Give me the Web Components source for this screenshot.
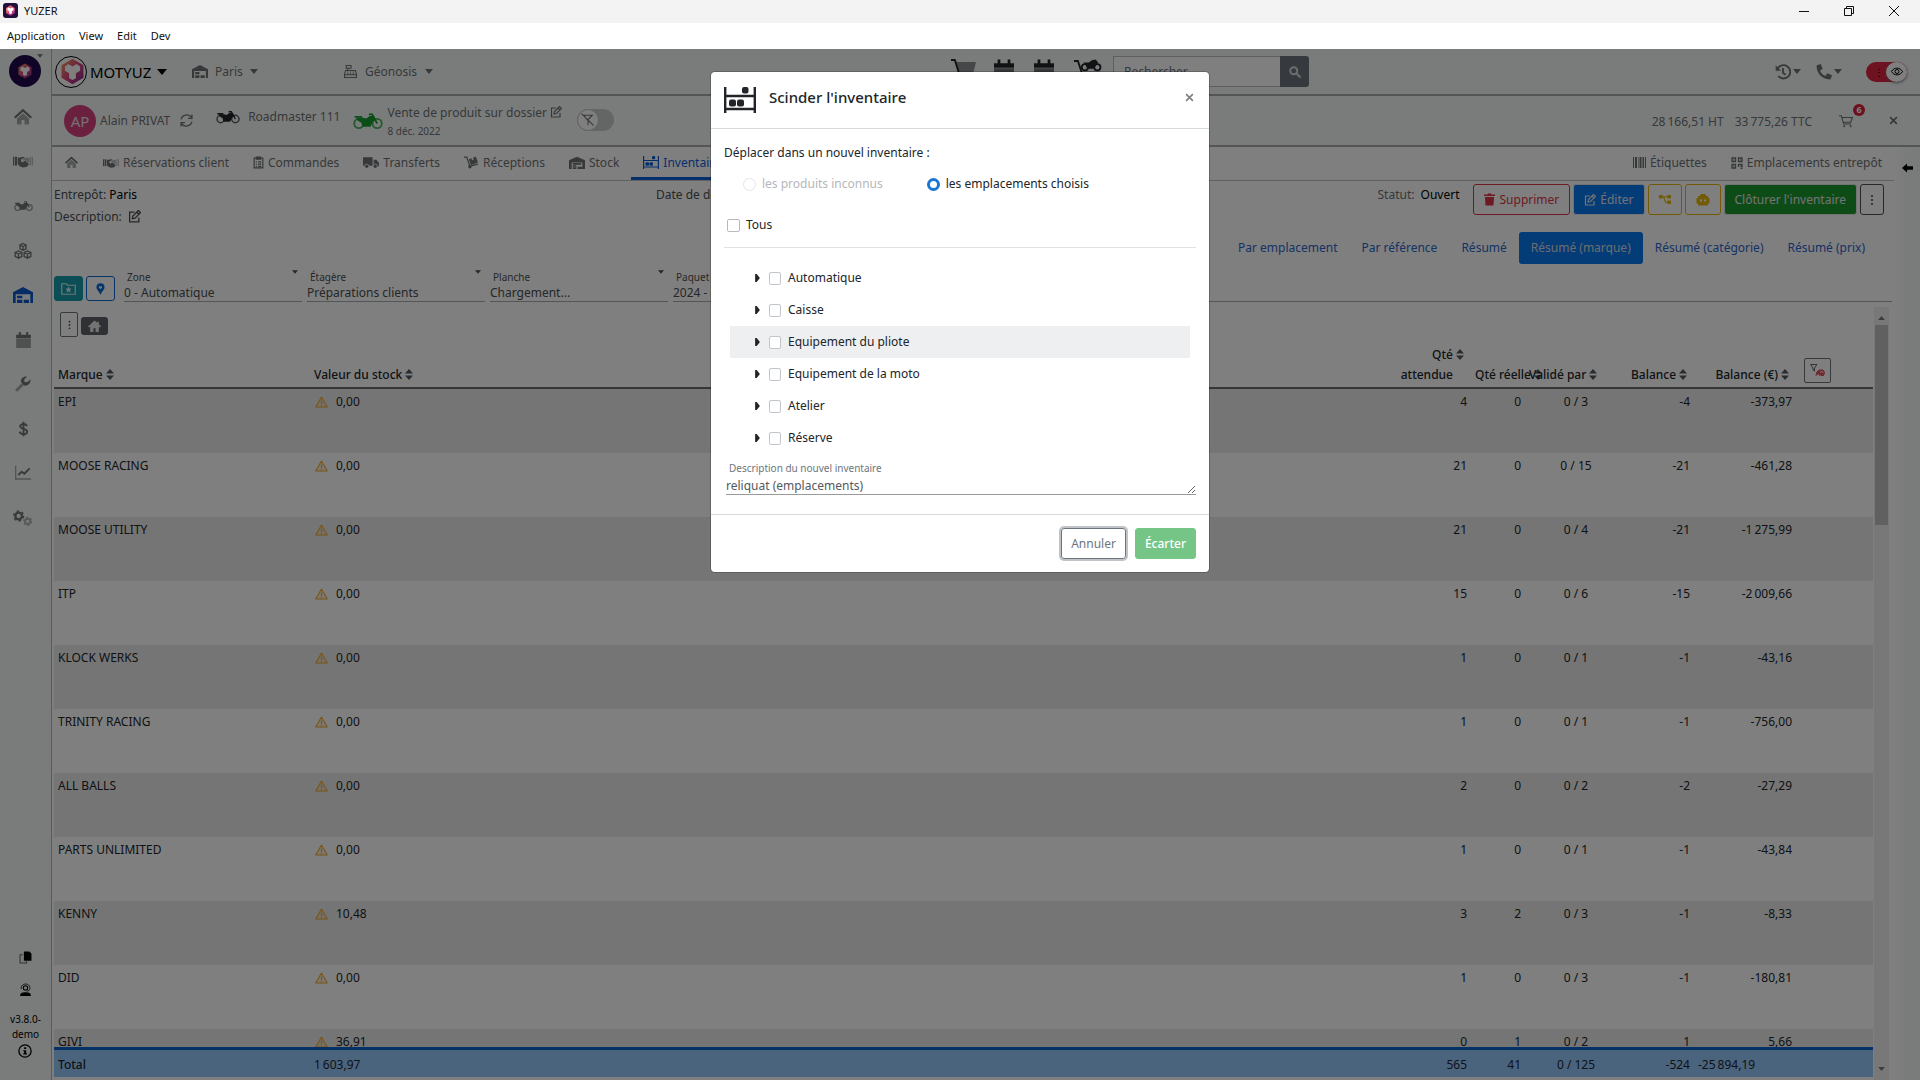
<!DOCTYPE html>
<html lang="fr">
<head>
<meta charset="utf-8">
<title>YUZER</title>
<style>
html,body{margin:0;height:100%;overflow:hidden}
body{font:12px/20px "Noto Sans","Open Sans",sans-serif;color:#212529;background:#fff}
</style>
</head>
<body>
<yz-app></yz-app>
<script>
const ICONS = {
  logo: ['0 0 32 32', '<defs><linearGradient id="g" x1="0" y1="0" x2="1" y2="1"><stop offset="0" stop-color="#f2a05a"/><stop offset=".5" stop-color="#d9457a"/><stop offset="1" stop-color="#7c2a8c"/></linearGradient></defs><path fill="url(#g)" d="M16 1l13 7.500v15L16 31 3 23.500v-15z"/><path fill="#fff" d="M7 10l4-3 5 3 5-3 4 3v5l-5 3v6l-4 2-4-2v-6l-5-3z"/>'],
  home: ['0 0 24 24', '<path fill="none" stroke="currentColor" stroke-width="3" d="M1 13L12 3l11 10"/><path opacity=".6" fill="currentColor" d="M4 14l8-7 8 7v8h-6v-6h-4v6H4z"/>'],
  homeSolid: ['0 0 24 24', '<path fill="currentColor" d="M12 1L0 12l2 2 2-2v10h6v-7h4v7h6V12l2 2 2-2-4-4V3h-3v2z"/>'],
  hands: ['0 0 30 18', '<path fill="currentColor" d="M0 2h2v13H0zM3 2h3v13H3z"/><path opacity=".45" fill="currentColor" d="M25 2h2v13h-2zM28 2h2v13h-2z"/><path fill="currentColor" d="M7 3h4l4-1 3 1-6 3v3l3 1 3-2 6 5-3 4-6 1-5-2-3-3z"/><path opacity=".5" fill="currentColor" d="M15 6l5-3 4 1v8l-6-5-3 1z"/>'],
  moto: ['0 0 36 20', '<g fill="none" stroke="currentColor" stroke-width="2.200"><g opacity=".75"><circle cx="7" cy="13" r="5.500"/><circle cx="29" cy="13" r="5.500"/></g><path d="M29 13L23 2h-4M2 5h9"/></g><path fill="currentColor" d="M4 6h8l4 1 4-3h5l2 4-3 3-3 6H11l-1-5-5-3z"/>'],
  boxes: ['0 0 24 22', '<g fill="none" stroke="currentColor" stroke-width="1.800"><path d="M12 1l4 2v5l-4 2-4-2V3zM8 3l4 2 4-2M12 5v5M6 11l4.500 2v5L6 20.500 1.500 18v-5zM1.500 13L6 15l4.500-2M6 15v5M18 11l4.500 2v5L18 20.500 13.500 18v-5zM13.500 13l4.500 2 4.500-2M18 15v5"/></g>'],
  warehouse: ['0 0 30 24', '<path fill="currentColor" d="M0 24V8L15 0l15 8v16h-4V11H4v13zM6 13h8v4H6zM6 19h8v5H6zM16 19h8v5h-8z"/>'],
  calendar: ['0 0 22 24', '<path fill="currentColor" d="M0 4h4V0h3v4h8V0h3v4h4v5H0z"/><path opacity=".65" fill="currentColor" d="M0 9.500h22V24H0z"/>'],
  wrench: ['0 0 24 24', '<path opacity=".6" fill="currentColor" d="M1 20l9-9 3 3-9 9-3 0z"/><path fill="currentColor" d="M9 9c-1-5 4-9 9-8l-4 4v4h5l4-4c1 6-4 11-10 9z"/>'],
  dollar: ['0 0 16 24', '<path fill="none" stroke="currentColor" stroke-width="2.800" d="M13.500 7.500C12 5 9.500 4.500 8 4.500c-3 0-5 1.500-5 3.500 0 5 10.500 3 10.500 8 0 2.500-2.500 3.800-5.500 3.800S3 18.500 2 16M8 1v22"/>'],
  chart: ['0 0 24 22', '<path opacity=".6" fill="none" stroke="currentColor" stroke-width="2" d="M1 0v20h23"/><path fill="none" stroke="currentColor" stroke-width="2.800" d="M5 14l5-5 4 3 8-8"/>'],
  gears: ['0 0 30 24', '<circle cx="8.500" cy="9" r="5" fill="none" stroke="currentColor" stroke-width="3.500"/><circle cx="8.500" cy="9" r="7.500" fill="none" stroke="currentColor" stroke-width="2" stroke-dasharray="3.500 4.350"/><g opacity=".5"><circle cx="22" cy="17" r="4" fill="none" stroke="currentColor" stroke-width="3"/><circle cx="22" cy="17" r="6" fill="none" stroke="currentColor" stroke-width="2" stroke-dasharray="3 3.280"/></g>'],
  copy: ['0 0 24 24', '<path fill="currentColor" d="M9 1h10l4 4v13H9z"/><path fill="none" stroke="currentColor" opacity=".6" stroke-width="2" d="M7 7H2v15h12v-3"/>'],
  support: ['0 0 24 24', '<path fill="currentColor" d="M2 24c0-6 4-7 10-7s10 1 10 7z"/><circle cx="12" cy="9" r="4" fill="none" stroke="currentColor" stroke-width="2"/><path fill="none" stroke="currentColor" stroke-width="1.500" d="M4 11C3-1 21-1 20 10c0 4-3 5-6 5"/>'],
  info: ['0 0 24 24', '<circle cx="12" cy="12" r="10.500" fill="none" stroke="currentColor" stroke-width="2.200"/><path fill="currentColor" d="M10.500 5.500h3.500v3h-3.500zM9 10.500h5V16h1.500v2H9v-2h1.500v-3.500H9z"/>'],
  register: ['0 0 24 24', '<path fill="none" stroke="currentColor" stroke-width="2" d="M4 1h9v5H4zM7 6v4M3 10h18l2 7v6H1v-6zM1 18h22M6 13h2M11 13h2M16 13h2M6 16h2M11 16h2M16 16h2"/>'],
  cartBig: ['0 0 26 26', '<path fill="none" stroke="currentColor" stroke-width="2" d="M0 1h4l5 16h14M9 17l-1 3h15"/><path opacity=".5" fill="currentColor" d="M5 3h21l-3 12H9z"/><circle cx="10" cy="23" r="2" fill="currentColor"/><circle cx="21" cy="23" r="2" fill="currentColor"/>'],
  motoSide: ['0 0 36 24', '<path fill="none" stroke="currentColor" stroke-width="2.400" d="M0 3h5l5 15h24"/><g fill="none" stroke="currentColor" stroke-width="2.400"><circle cx="14" cy="11" r="4"/><circle cx="30" cy="11" r="4"/></g><path fill="currentColor" d="M12 5h7l4-3 5-1 3 4-3 4-3 4h-8l-2-5z"/>'],
  cart: ['0 0 24 24', '<path fill="none" stroke="currentColor" stroke-width="1.800" d="M0 3h4l4 14h13M5 6h18l-3 8H7.500"/><circle cx="9" cy="21" r="1.800" fill="currentColor"/><circle cx="20" cy="21" r="1.800" fill="currentColor"/>'],
  search: ['0 0 24 24', '<circle cx="9.500" cy="9.500" r="7" fill="none" stroke="currentColor" stroke-width="4"/><path stroke="currentColor" stroke-width="4" d="M15 15l8 8"/>'],
  history: ['0 0 24 24', '<path fill="none" stroke="currentColor" stroke-width="2.800" d="M4 7a10 10 0 1 1 1 11M12 6v7l4 3"/><path fill="currentColor" d="M1 2v8h8z"/>'],
  phone: ['0 0 24 24', '<path fill="currentColor" d="M1 2l6-2 3 7-4 3c2 4 4 6 8 8l3-4 7 3-2 6C10 24 0 14 1 2z"/>'],
  eye: ['0 0 24 16', '<path fill="none" stroke="currentColor" stroke-width="2" d="M1 8c5-9 17-9 22 0-5 9-17 9-22 0z"/><circle cx="12" cy="8" r="4" fill="none" stroke="currentColor" stroke-width="2"/>'],
  refresh: ['0 0 24 24', '<path fill="none" stroke="currentColor" stroke-width="2.400" d="M2 10c2-9 14-11 19-4M22 14c-2 9-14 11-19 4M22 1v7h-7M2 23v-7h7"/>'],
  edit: ['0 0 24 24', '<path fill="none" stroke="currentColor" stroke-width="2.400" d="M12 4H3v18h17v-8M8 16l1-5L19 1l4 4-10 10zM16 4l4 4"/>'],
  pinOff: ['0 0 24 24', '<path fill="none" stroke="currentColor" stroke-width="2" d="M1 1l22 22M5 4h16l-8 8v10M5 4l6 8"/>'],
  clipboard: ['0 0 20 24', '<path fill="none" stroke="currentColor" stroke-width="2.200" d="M2 4h16v18H2zM6 2h8v4H6zM5 11h2M9 11h6M5 15h2M9 15h6M5 19h2M9 19h6"/>'],
  truck: ['0 0 30 24', '<path fill="currentColor" d="M0 2h18v16H0zM20 7h5l5 6v6H20z"/><g fill="currentColor" stroke="#fff" stroke-width="1.500"><circle cx="7" cy="19" r="4"/><circle cx="23" cy="19" r="4"/></g>'],
  dolly: ['0 0 28 24', '<path fill="none" stroke="currentColor" stroke-width="2.400" d="M0 2h5l6 17 15-4"/><circle cx="11" cy="20" r="3.200" fill="currentColor"/><path fill="currentColor" d="M9 6l5-2 1 4 3-1-1-4 5-2 4 11-13 5z"/>'],
  stock: ['0 0 30 24', '<path fill="currentColor" fill-rule="evenodd" d="M0 24V8L15 1l15 7v16h-5V12H5v12zM7 13h16v3H7zM7 17h7v3H7zM7 21h7v3H7zM16 20h9v4h-9z"/>'],
  shelf: ['0 0 32 26', '<path fill="none" stroke="currentColor" stroke-width="2.400" d="M1.200 0v26M30.800 0v26M1 9h30M1 22h30"/><rect x="18" y="0" width="6.500" height="6.500" rx="2" fill="currentColor"/><rect x="5" y="12.500" width="7" height="7" rx="2" fill="currentColor"/><rect x="13" y="12.500" width="7" height="7" rx="2" fill="currentColor"/>'],
  barcode: ['0 0 26 22', '<path fill="currentColor" d="M0 0h2v22H0zM4 0h4v22H4zM10 0h1v22h-1zM13 0h4v22h-4zM19 0h3v22h-3zM24 0h2v22h-2z"/>'],
  qr: ['0 0 24 24', '<path fill="none" stroke="currentColor" stroke-width="2.600" d="M2 2h7v7H2zM15 2h7v7h-7zM2 15h7v7H2zM5 5.500h1M18 5.500h1M5 18.500h1M15 14v6M15 15h7v4h-3M19 23h4"/>'],
  arrow: ['0 0 24 20', '<path fill="currentColor" d="M0 10L11 0v6h13v8H11v6z"/>'],
  trash: ['0 0 22 24', '<path fill="currentColor" d="M0 2h7l1-2h6l1 2h7v3H0zM2 7h18l-1 17H3z"/>'],
  tree: ['0 0 26 22', '<path fill="none" stroke="currentColor" stroke-width="2.400" d="M5 5h13M10 5l4 12h5"/><path fill="currentColor" d="M0 1h8v8H0zM18 1h8v8h-8zM18 13h8v8h-8z"/>'],
  robot: ['0 0 26 24', '<path fill="currentColor" fill-rule="evenodd" d="M7 4a6 5 0 0 1 12 0h4v4h3v11h-3v4H3v-4H0V8h3V4zM7 11v4h4v-4zM15 11v4h4v-4z"/>'],
  dots: ['0 0 6 24', '<circle cx="3" cy="4" r="2.200" fill="currentColor"/><circle cx="3" cy="12" r="2.200" fill="currentColor"/><circle cx="3" cy="20" r="2.200" fill="currentColor"/>'],
  folder: ['0 0 30 24', '<path fill="none" stroke="currentColor" stroke-width="2.400" d="M1.500 1.500h9l3 3h15v18h-27z"/><path fill="currentColor" d="M15 7l2 4 4 .5-3 3 1 4.500-4-2-4 2 1-4.500-3-3 4-.5z"/>'],
  pin: ['0 0 20 26', '<path fill="currentColor" fill-rule="evenodd" d="M10 0a9 9 0 0 1 9 9c0 5-6 9-9 17C7 18 1 14 1 9a9 9 0 0 1 9-9zM7 6v5l3 2 3-2V6l-3 2z"/>'],
  warn: ['0 0 26 24', '<path fill="currentColor" fill-opacity=".2" stroke="currentColor" stroke-width="2.200" stroke-linejoin="round" d="M13 2l11.500 20h-23z"/><path stroke="currentColor" stroke-width="2.200" d="M13 9v6.500M13 17.500v2.200"/>'],
  sort: ['0 0 16 22', '<path fill="currentColor" d="M8 0l8 9H0zM0 13h16l-8 9z"/>'],
  filter: ['0 0 30 26', '<path fill="none" stroke="currentColor" stroke-width="1.800" d="M1 1h13l-5 7v6l-3-2V8z"/><path fill="#dc3545" fill-opacity=".5" stroke="#dc3545" stroke-width="2" d="M12 23l2-7 4-4h8l3 5-2 6h-4v-4h4M14 18h6v6M18 14v6"/>'],
  close: ['0 0 24 24', '<path stroke="currentColor" stroke-width="4.500" d="M3 3l18 18M21 3L3 21"/>'],
  winMin: ['0 0 10 10', '<path stroke="currentColor" d="M0 5.500h10"/>'],
  winMax: ['0 0 10 10', '<path fill="none" stroke="currentColor" d="M.5 2.500h7v7h-7zM2.500 2V.5h7v7H8"/>'],
  winClose: ['0 0 10 10', '<path stroke="currentColor" d="M0 0l10 10M10 0L0 10"/>'],
  down: ['0 0 10 6', '<path fill="currentColor" d="M0 0h10L5 6z"/>'],
  right: ['0 0 6 10', '<path fill="currentColor" d="M0 0h2l4 5-4 5H0z"/>'],
  up: ['0 0 10 6', '<path fill="currentColor" d="M0 6h10L5 0z"/>']
};
const BASE = `*{box-sizing:border-box}
a{color:inherit;text-decoration:none}
button{font:inherit;color:inherit;background:none;border:0;padding:0;display:inline-flex;align-items:center;justify-content:center;gap:4px}
input,select,textarea{font:inherit;color:inherit;margin:0}`;
function define(name, css, html, setup) {
  customElements.define(name, class extends HTMLElement {
    constructor() {
      super();
      const t = document.createElement('template');
      t.innerHTML = `<style>${BASE}${css}</style>${html}`;
      this.attachShadow({mode: 'open'}).append(t.content.cloneNode(true));
    }
    connectedCallback() { if (setup) setup(this); }
  });
}
const ico = (name, w, h) => `<yz-icon name="${name}" style="width:${w}px;height:${h || w}px"></yz-icon>`;

define('yz-icon', ':host{display:inline-block;flex:none}svg{display:block;width:100%;height:100%}', '<svg aria-hidden="true"></svg>', el => {
  const [box, body] = ICONS[el.getAttribute('name')];
  const svg = el.shadowRoot.querySelector('svg');
  svg.setAttribute('viewBox', box);
  svg.innerHTML = body;
});

define('yz-titlebar', `:host{display:block;flex:none;color:#111}
header{display:flex;align-items:center;height:23px;background:#f3f3f3;padding:0 21px 2px 3px}
.logo{background:#22103c;border-radius:3px;padding:2px;display:flex;margin-right:6px}
h1{font-size:11px;font-weight:400;margin:0;flex:1}
.win{display:flex;gap:35px}
nav{display:flex;height:26px;align-items:center;gap:14px;padding:0 7px;font-size:11px;background:#fff}`,
`<header><span class="logo">${ico('logo', 11)}</span><h1>YUZER</h1>
<div class="win"><button aria-label="Réduire">${ico('winMin', 10)}</button><button aria-label="Restaurer">${ico('winMax', 10)}</button><button aria-label="Fermer">${ico('winClose', 10)}</button></div></header>
<nav><button>Application</button><button>View</button><button>Edit</button><button>Dev</button></nav>`);

define('yz-sidebar', `:host{display:flex;flex-direction:column;align-items:center;width:52px;flex:none;background:#f5f9f8;border-right:1px solid #b4b7b6;color:#6f7374;padding:6px 5px 20px 0;position:relative}
.brand{width:32px;height:32px;border-radius:50%;background:#210a4e;display:flex;align-items:center;justify-content:center;margin:0 0 0 3px}
.caret{position:absolute;top:5px;right:8px}
nav{display:flex;flex-direction:column;flex:1;padding-top:7px}
nav a{height:45px;display:flex;align-items:center;justify-content:center;margin-bottom:-1px}
nav a:nth-child(odd){margin-bottom:0}
nav a.on{color:#0a58ca}
.foot{display:flex;flex-direction:column;align-items:center;color:#000;font-size:10px;line-height:15px;text-align:center;padding-left:5px}
.foot button{height:32px}.foot button:last-child{height:18px}
.foot p{margin:7px 0 0}`,
`<div class="brand">${ico('logo', 16)}</div><yz-icon class="caret" name="down" style="width:6px;height:4px"></yz-icon>
<nav>${[['home', 18], ['hands', 20, 13], ['moto', 19, 12], ['boxes', 18], ['warehouse', 20, 16], ['calendar', 15, 16], ['wrench', 16], ['dollar', 11, 16], ['chart', 16], ['gears', 20, 16]].map(([n, w, h], i) => `<a href="#${n}" aria-label="${n}"${i === 4 ? ' class="on"' : ''}>${ico(n, w, h)}</a>`).join('')}</nav>
<div class="foot"><button aria-label="Copier">${ico('copy', 13)}</button><button aria-label="Support">${ico('support', 13)}</button><p>v3.8.0-<br>demo</p><button aria-label="Informations">${ico('info', 14)}</button></div>`);

define('yz-topbar', `:host{display:flex;align-items:center;height:47px;flex:none;background:#f5f9f8;border-bottom:2px solid #a8acab;padding:0 13px 0 3px;color:#6d7173}
.org{display:flex;align-items:center;justify-content:flex-start;gap:3px;color:#000;font-size:15px;width:137px}
.org .logo{width:32px;height:32px;border:1px solid #000;border-radius:50%;display:flex;align-items:center;justify-content:center;flex:none;background:#fff}
.org yz-icon:last-child{margin-left:3px}
.pick{gap:7px;justify-content:flex-start;width:152px}
.pick.reg{gap:8px;width:607px}
.short{display:flex;gap:20px;color:#212529;align-items:flex-start;width:162px}
.short yz-icon:first-child{margin-right:-2px}
form{display:flex;height:31px;margin-right:auto}
input{width:167px;border:1px solid #b8bcbf;border-right:0;padding:0 10px;background:#fff;outline:0}
input::placeholder{color:#6c757d}
form button{width:29px;background:#6c757d;color:#d8dadd;border-radius:0 3px 3px 0}
.menu{gap:2px;margin-right:15px}
.eye{width:41px;height:20px;border-radius:10px;background:#dc2340;color:#000;display:flex;align-items:center;justify-content:flex-end;gap:0;font-size:10px;margin-left:9px}
.eye span:first-child{width:14px;flex:none;text-align:center}
.eye span:last-child{width:21px;height:20px;flex:none;border-radius:50%;background:#fff;box-shadow:0 1px 3px #777;display:flex;align-items:center;justify-content:center}`,
`<button class="org"><span class="logo">${ico('logo', 27)}</span>MOTYUZ${ico('down', 10, 6)}</button>
<button class="pick">${ico('warehouse', 16, 13)}Paris${ico('down', 8, 5)}</button>
<button class="pick reg">${ico('register', 13)}Géonosis${ico('down', 8, 5)}</button>
<div class="short">${ico('cartBig', 25, 27)}${ico('calendar', 20, 25)}${ico('calendar', 20, 25)}${ico('motoSide', 28, 20)}</div>
<form><input type="search" placeholder="Rechercher" aria-label="Rechercher"><button type="button" aria-label="Lancer la recherche">${ico('search', 12)}</button></form>
<button class="menu" aria-label="Historique">${ico('history', 16)}${ico('down', 8, 5)}</button>
<button class="menu" aria-label="Téléphone">${ico('phone', 16)}${ico('down', 8, 5)}</button>
<button class="eye" aria-label="Visibilité"><span>⋮</span><span>${ico('eye', 12, 9)}</span></button>`);

define('yz-clientbar', `:host{display:flex;align-items:center;height:51px;flex:none;background:#f5f9f8;border-bottom:2px solid #a8acab;padding:0 22px 0 12px;color:#6d7173}
.avatar{width:32px;height:32px;border-radius:50%;background:#d8407f;color:#e8e0e4;font-size:15px;display:flex;align-items:center;justify-content:center;margin-right:4px}
.who{margin-right:10px}
.bike{display:flex;gap:8px;height:28px;align-items:flex-start;margin:0 13px 0 23px}
.bike yz-icon{color:#212529;margin-top:3px}
.sale{line-height:18px;margin-left:4px;padding-top:2px}
.sale small{display:block;font-size:10px}
.sale yz-icon{margin-left:3px;vertical-align:-1px}
.green{color:#159a2c}
.sw{width:37px;height:22px;border-radius:11px;background:#c9cccc;display:flex;justify-content:flex-start;margin:-2px auto 0 15px}
.sw span{width:22px;height:22px;border-radius:50%;background:#fff;border:1px solid #c2c4c4;display:flex;align-items:center;justify-content:center}
.sum{display:flex;gap:11px;margin-right:27px;padding-top:2px}
.cart{position:relative;margin-right:36px}
.cart b{position:absolute;left:14px;top:-10px;width:12px;height:12px;line-height:12px;border-radius:50%;background:#dc1f3c;color:#fff;font-size:9px}`,
`<span class="avatar">AP</span><span class="who">Alain PRIVAT</span><button aria-label="Actualiser">${ico('refresh', 13)}</button>
<div class="bike">${ico('moto', 24, 14)}Roadmaster 111</div>
<yz-icon class="green" name="moto" style="width:30px;height:18px"></yz-icon>
<div class="sale">Vente de produit sur dossier${ico('edit', 12)}<small>8 déc. 2022</small></div>
<button class="sw" aria-label="Épingler"><span>${ico('pinOff', 13)}</span></button>
<div class="sum"><span>28\u202f166,51 HT</span><span>33\u202f775,26 TTC</span></div>
<button class="cart" aria-label="Panier">${ico('cart', 14)}<b>6</b></button>
<button aria-label="Fermer le dossier">${ico('close', 9)}</button>`);

define('yz-tab', `:host{display:block}
a{display:flex;align-items:center;gap:4px;height:33px;padding:1px 12px 0;border-bottom:3px solid transparent;white-space:nowrap}
:host([active]) a{color:#0b5fd8;border-color:#0b5fd8}`,
`<a href="#"><slot name="icon"></slot><slot></slot></a>`);
define('yz-tabs', `:host{display:flex;height:34px;flex:none;border-bottom:1px solid #bfc1c1;color:#6d7173}
.gap{flex:1}`,
[['home', 15, 13, ''], ['hands', 16, 10, 'Réservations client'], ['clipboard', 11, 13, 'Commandes'], ['truck', 16, 13, 'Transferts'], ['dolly', 15, 13, 'Réceptions'], ['stock', 16, 13, 'Stock'], ['shelf', 16, 13, 'Inventaires'], null, ['barcode', 13, 11, 'Étiquettes'], ['qr', 12, 12, 'Emplacements entrepôt']]
 .map(t => t ? `<yz-tab${t[0] === 'shelf' ? ' active' : ''}><yz-icon slot="icon" name="${t[0]}" style="width:${t[1]}px;height:${t[2]}px"></yz-icon>${t[3]}</yz-tab>` : '<span class="gap"></span>').join(''));

define('yz-inventory-head', `:host{display:block;flex:none;color:#4b4f52;padding:3px 10px 0 2px}
.row{display:flex;justify-content:space-between}
.facts{display:flex;flex:1}
p{margin:0;line-height:22px}
.facts div:first-child{width:602px}
.facts yz-icon{vertical-align:-2px;margin-left:3px}
b{font-weight:400;color:#000}
.act{display:flex;gap:3px}
.act p{color:#6d7173;margin-right:10px}.act b{margin-left:3px}
.act button{height:31px;border:1px solid;border-radius:3px;padding:0 10px}
.act .red{gap:5px;color:#dc3545}.blue{background:#0878f0;color:#e4e6e8;border-color:#0878f0}.yel{color:#e6b50c}.green{background:#1d982e;color:#e4e6e8;border-color:#1d982e}
.act .dots{padding:0 9px}
nav{display:flex;justify-content:flex-end;margin-top:4px;color:#2b66c9;padding-right:7px}
nav a{padding:6px 12px;height:32px}
nav a.on{background:#0878f0;color:#d8dadd;border-radius:3px}`,
`<div class="row"><div class="facts"><div><p>Entrepôt: <b>Paris</b></p><p>Description: ${ico('edit', 13)}</p></div><p>Date de début:</p></div>
<div class="act"><p>Statut: <b>Ouvert</b></p><button class="red">${ico('trash', 11, 13)}Supprimer</button><button class="blue">${ico('edit', 12)}Éditer</button><button class="yel" aria-label="Scinder">${ico('tree', 12, 11)}</button><button class="yel" aria-label="Automatiser">${ico('robot', 14, 12)}</button><button class="green">Clôturer l'inventaire</button><button class="dots" aria-label="Plus">${ico('dots', 4, 12)}</button></div></div>
<nav><a href="#">Par emplacement</a><a href="#">Par référence</a><a href="#">Résumé</a><a href="#" class="on">Résumé (marque)</a><a href="#">Résumé (catégorie)</a><a href="#">Résumé (prix)</a></nav>`);

define('yz-field', `:host{display:block;width:178px;border-bottom:1px solid #a9abac;position:relative;color:#4b4f52}
:host([wide]){flex:1}
label{display:block;font-size:10px;line-height:14px;padding-left:3px}
select{appearance:none;border:0;background:none;width:100%;height:17px;line-height:17px;padding:0;outline:0;display:block}
yz-icon{position:absolute;right:4px;top:0}
:host([wide]) yz-icon{display:none}`,
'<label for="s"></label><select id="s"><option></option></select>' + ico('down', 6, 4),
el => {
  el.shadowRoot.querySelector('label').textContent = el.getAttribute('label');
  el.shadowRoot.querySelector('option').textContent = el.getAttribute('value');
});
define('yz-filters', `:host{display:flex;gap:5px;align-items:flex-end;margin:6px 2px 0 2px;flex:none}
button{height:25px;width:29px;border-radius:3px;border:1px solid #0b69d6;color:#0b69d6;margin:0 -2px 1px 0}
button.teal{background:#179daa;border-color:#179daa;color:#d8eef0}
button+button{margin-right:4px}`,
`<button class="teal" aria-label="Favoris">${ico('folder', 15, 12)}</button><button aria-label="Localiser">${ico('pin', 9, 12)}</button>
<yz-field label="Zone" value="0 - Automatique"></yz-field><yz-field label="Étagère" value="Préparations clients"></yz-field><yz-field label="Planche" value="Chargement..."></yz-field><yz-field wide label="Paquet" value="2024 - 01"></yz-field>`);

const rows = [['EPI', '0,00', '4', '0', '0 / 3', '-4', '-373,97'], ['MOOSE RACING', '0,00', '21', '0', '0 / 15', '-21', '-461,28'], ['MOOSE UTILITY', '0,00', '21', '0', '0 / 4', '-21', '-1\u202f275,99'], ['ITP', '0,00', '15', '0', '0 / 6', '-15', '-2\u202f009,66'], ['KLOCK WERKS', '0,00', '1', '0', '0 / 1', '-1', '-43,16'], ['TRINITY RACING', '0,00', '1', '0', '0 / 1', '-1', '-756,00'], ['ALL BALLS', '0,00', '2', '0', '0 / 2', '-2', '-27,29'], ['PARTS UNLIMITED', '0,00', '1', '0', '0 / 1', '-1', '-43,84'], ['KENNY', '10,48', '3', '2', '0 / 3', '-1', '-8,33'], ['DID', '0,00', '1', '0', '0 / 3', '-1', '-180,81'], ['GIVI', '36,91', '0', '1', '0 / 2', '1', '5,66']];
const sort = ico('sort', 8, 11);
const cols = '<colgroup><col class="a"><col><col class="c"><col class="d"><col class="e"><col class="f"><col class="g"><col class="h"></colgroup>';
define('yz-stock-table', `:host{display:flex;flex:1;min-height:0;margin:5px 5px 0 2px}
.pane{flex:1;min-width:0;display:flex;flex-direction:column;margin-bottom:3px}
.view{flex:1;min-height:0;overflow:hidden}
.tools{display:flex;gap:3px;padding:5px 6px 0}
.tools button{width:18px;height:25px;border:1px solid #6c757d;border-radius:2px;color:#555}
.tools button+button{width:27px;height:18px;background:#5f6368;color:#e8e8e8;border:0;border-radius:3px;margin-top:5px}
table{width:100%;table-layout:fixed;border-spacing:0}
.view table{margin-top:6px}
col.a{width:256px}col.c{width:102px}col.d{width:54px}col.e{width:102px}col.f{width:67px}col.g{width:102px}col.h{width:77px}
th{font-weight:500;text-align:left;vertical-align:bottom;white-space:nowrap;padding:0 4px 2px;border-bottom:2px solid #6a6c6e;height:46px}
th span{display:inline-flex;gap:3px;align-items:flex-start;vertical-align:bottom}
th yz-icon{color:#555a5e;margin-top:4px}
td{height:64px;padding:3px 4px;vertical-align:top}
tbody tr:nth-child(odd){background:#ebebeb}
.r{text-align:right}.m{text-align:center}
th.r{padding-right:7px}
td yz-icon{color:#f0ac2c;vertical-align:-2px;margin:0 8px 0 1px}
th button{width:27px;height:25px;border:1px solid #6c757d;border-radius:2px;margin:0 0 2px 4px;vertical-align:bottom}
th button yz-icon{margin:0}
.total td{height:30px;background:#96c8fc;border-top:3px solid #0b63ce;padding:5px 4px 2px}
.total td:first-child{font-weight:500}
.bar{width:15px;background:#f1f1f1;display:flex;flex-direction:column;align-items:center;margin-left:1px;padding:9px 0;color:#777}
.thumb{width:13px;height:200px;background:#c1c1c1;margin:5px 0 auto}`,
`<div class="pane"><div class="view"><div class="tools"><button aria-label="Options">${ico('dots', 3, 10)}</button><button aria-label="Accueil">${ico('homeSolid', 13)}</button></div>
<table>${cols}
<thead><tr><th><span>Marque${sort}</span></th><th><span>Valeur du stock${sort}</span></th><th class="r"><span>Qté<br>attendue${sort}</span></th><th><span>Qté réelle${sort}</span></th><th><span>Validé par${sort}</span></th><th><span>Balance${sort}</span></th><th class="r"><span>Balance (€)${sort}</span></th><th><button aria-label="Filtrer">${ico('filter', 15, 13)}</button></th></tr></thead>
<tbody>${rows.map(r => `<tr><td>${r[0]}</td><td>${ico('warn', 13, 12)}${r[1]}</td><td class="r">${r[2]}</td><td class="r">${r[3]}</td><td class="m">${r[4]}</td><td class="r">${r[5]}</td><td class="r">${r[6]}</td><td></td></tr>`).join('')}</tbody></table></div>
<table class="total">${cols}<tbody><tr><td>Total</td><td>1\u202f603,97</td><td class="r">565</td><td class="r">41</td><td class="m">0 / 125</td><td class="r">-524</td><td>-25\u202f894,19</td><td></td></tr></tbody></table></div>
<div class="bar">${ico('up', 7, 4)}<div class="thumb"></div>${ico('down', 7, 4)}</div>`);

define('yz-tree-item', `:host{display:flex;align-items:center;height:32px;padding-left:25px}
:host([hover]){background:#eeeff1}
label{display:flex;align-items:center;gap:7px}
input{appearance:none;width:12px;height:13px;border:1px solid #c0c6cc;border-radius:2px;background:#fff}
yz-icon{margin-right:9px}`,
`${ico('right', 5, 8)}<label><input type="checkbox"><slot></slot></label>`);

define('yz-split-dialog', `:host{position:absolute;inset:0;background:rgba(0,0,0,.5);display:flex;justify-content:center;align-items:flex-start;padding-top:23px}
section{width:498px;background:#fff;border-radius:4px;box-shadow:0 0 0 1px rgba(0,0,0,.2)}
header{display:flex;align-items:center;height:57px;padding:0 15px 0 13px;border-bottom:1px solid #d8dbde}
h2{font-size:15px;font-weight:500;margin:-6px auto 0 13px}
header button{color:#808080;margin-top:-6px}
.body{padding:14px 13px 19px}
p{margin:0}
.radios{display:flex;padding:11px 0 0 19px;gap:44px}
label{display:flex;align-items:center;gap:6px}
input{appearance:none;width:13px;height:13px;border:1px solid #adb5bd;background:#fff}
[type=radio]{border-radius:50%}
[type=radio]:checked{border:3px solid #1976d2}
.off{color:#b4b7ba}.off input{border-color:#e2e4e6}
[type=checkbox]{border-radius:2px;border-color:#b4bac0}
.all{padding:21px 0 12px 3px;border-bottom:1px solid #e0e2e4;margin-bottom:14px}
.tree{padding:0 6px}
.desc{margin:6px 0 0 2px;border-bottom:1px solid #999}
.desc label{font-size:10px;line-height:17px;color:#6c757d;padding-left:3px}
textarea{display:block;width:100%;height:17px;line-height:17px;border:0;padding:0;outline:0;resize:vertical;overflow:hidden;color:#54595e;background:none}
footer{display:flex;justify-content:flex-end;gap:9px;border-top:1px solid #d8dbde;padding:13px}
footer button{height:31px;border-radius:3px;padding:0 9px;border:1px solid #6c757d;color:#6c757d}
footer button.focus{box-shadow:0 0 0 2px #c0c4c8}
footer .ok{background:#75c586;border-color:#75c586;color:#fff;font-weight:500}`,
`<section role="dialog" aria-labelledby="t"><header>${ico('shelf', 32, 26)}<h2 id="t">Scinder l'inventaire</h2><button aria-label="Fermer">${ico('close', 9)}</button></header>
<div class="body"><p>Déplacer dans un nouvel inventaire :</p>
<div class="radios"><label class="off"><input type="radio" name="what" disabled>les produits inconnus</label><label><input type="radio" name="what" checked>les emplacements choisis</label></div>
<label class="all"><input type="checkbox">Tous</label>
<div class="tree"><yz-tree-item>Automatique</yz-tree-item><yz-tree-item>Caisse</yz-tree-item><yz-tree-item hover>Equipement du pliote</yz-tree-item><yz-tree-item>Equipement de la moto</yz-tree-item><yz-tree-item>Atelier</yz-tree-item><yz-tree-item>Réserve</yz-tree-item></div>
<div class="desc"><label for="d">Description du nouvel inventaire</label><textarea id="d">reliquat (emplacements)</textarea></div></div>
<footer><button class="focus">Annuler</button><button class="ok">Écarter</button></footer></section>`);

define('yz-app', `:host{display:flex;flex-direction:column;height:100vh}
.app{display:flex;flex:1;min-height:0;position:relative}
.main{display:flex;flex-direction:column;flex:1;min-width:0}
.work{display:flex;flex:1;min-height:0}
main{flex:1;min-width:0;display:flex;flex-direction:column;background:#fff}
aside{width:26px;background:linear-gradient(90deg,#fff,#f5f9f8 12px);display:flex;justify-content:center;padding-top:16px;color:#000;align-items:flex-start}`,
`<yz-titlebar></yz-titlebar>
<div class="app"><yz-sidebar></yz-sidebar><div class="main"><yz-topbar></yz-topbar><yz-clientbar></yz-clientbar>
<div class="work"><main><yz-tabs></yz-tabs><yz-inventory-head></yz-inventory-head><yz-filters></yz-filters><yz-stock-table></yz-stock-table></main><aside><button aria-label="Déplier">${ico('arrow', 11, 10)}</button></aside></div></div>
<yz-split-dialog></yz-split-dialog></div>`);
</script>
</body>
</html>
